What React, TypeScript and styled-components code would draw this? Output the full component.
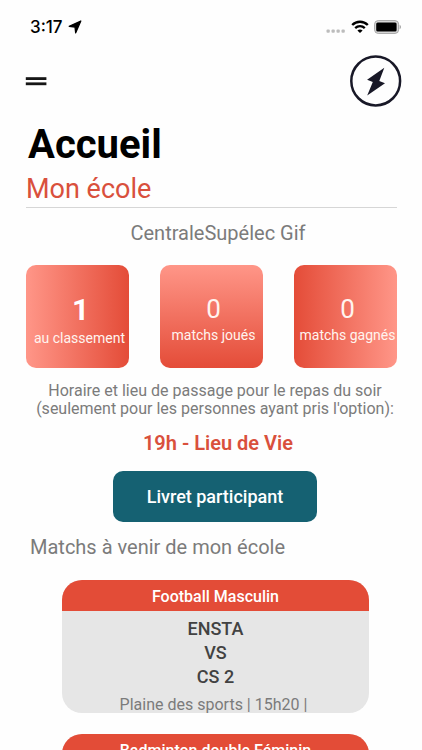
import React from "react";
import styled, { createGlobalStyle, css } from "styled-components";

const GlobalStyle = createGlobalStyle`
  *, *::before, *::after { box-sizing: border-box; }
  body {
    margin: 0;
    background: #fefefe;
    color: #7b7b7b;
    font-family: Roboto, "Liberation Sans", sans-serif;
  }
  :where(h1, h2, h3, p, dl, dt, dd) { margin: 0; font-weight: 400; }
`;

const Screen = styled.div`
  height: 100vh;
  overflow-y: auto;
  scrollbar-width: none;
`;

const StatusBar = styled.div`
  display: flex;
  align-items: center;
  justify-content: space-between;
  height: 54px;
  padding: 0 20px 0 30px;
  color: #000;
`;

const StatusGroup = styled.div<{ $gap: number }>`
  display: flex;
  align-items: center;
  gap: ${({ $gap }) => $gap}px;
`;

const Clock = styled.time`
  font: 500 17px/20px Inter, sans-serif;
`;

const TopBar = styled.header`
  display: flex;
  align-items: center;
  justify-content: space-between;
  height: 54px;
  padding: 0 20px 0 25px;
`;

const IconButton = styled.button`
  display: flex;
  padding: 0;
  border: 0;
  background: none;
  cursor: pointer;
`;

const Content = styled.main`
  padding: 13px 25px 24px 26px;
`;

const PageTitle = styled.h1`
  padding-left: 2px;
  color: #000;
  font-size: 40px;
  line-height: 48px;
  font-weight: 700;
`;

const SchoolTitle = styled.h2`
  padding-top: 3px;
  border-bottom: 1px solid #d6d6d6;
  color: #d9503c;
  font-size: 27px;
  line-height: 35px;
`;

const SchoolName = styled.p`
  margin-top: 12px;
  padding-left: 13px;
  font-size: 20px;
  line-height: 26px;
  text-align: center;
`;

const Stats = styled.dl`
  display: flex;
  justify-content: space-between;
  margin-top: 19px;
`;

const Stat = styled.div<{ $direction: string; $strong?: boolean }>`
  display: flex;
  flex-direction: column-reverse;
  align-items: center;
  justify-content: center;
  width: 103px;
  height: 103px;
  padding: 2px 0 0 4px;
  border-radius: 10px;
  background: linear-gradient(${({ $direction }) => $direction}, #ff9688, #e44c38);
  color: #fff4ef;

  dt {
    font-size: 14px;
    line-height: 18px;
    white-space: nowrap;
  }

  dd {
    font-size: 26px;
    line-height: 34px;
  }

  ${({ $strong }) =>
    $strong &&
    css`
      padding-top: 4px;
      dd {
        padding-left: 2px;
        color: #fff;
        font-size: 30px;
        line-height: 38px;
        font-weight: 700;
      }
    `}
`;

const MealNote = styled.p`
  margin-top: 14px;
  padding-left: 7px;
  font-size: 16px;
  line-height: 18px;
  text-align: center;
  white-space: nowrap;
`;

const MealPlace = styled.p`
  margin-top: 12px;
  padding-left: 13px;
  color: #d9503c;
  font-size: 20px;
  line-height: 26px;
  font-weight: 600;
  text-align: center;
`;

const Actions = styled.div`
  display: flex;
  justify-content: center;
  margin-top: 15px;
  padding-left: 7px;
`;

const BookletButton = styled.button`
  height: 51px;
  padding: 1px 34px 0;
  border: 0;
  border-radius: 10px;
  background: #156172;
  color: #fff;
  font: 500 18px/24px Roboto, sans-serif;
  cursor: pointer;
`;

const MatchesTitle = styled.h2`
  margin-top: 12px;
  padding-left: 4px;
  font-size: 20px;
  line-height: 26px;
`;

const MatchList = styled.div`
  display: flex;
  flex-direction: column;
  gap: 21px;
  margin-top: 20px;
  padding: 0 28px 0 36px;
`;

const MatchCard = styled.article`
  height: 133px;
  overflow: hidden;
  border-radius: 20px;
  background: #e6e6e6;
  text-align: center;
`;

const MatchSport = styled.h3`
  padding: 7px 0 4px;
  background: #e34c37;
  color: #fff;
  font-size: 16px;
  line-height: 20px;
  font-weight: 500;
`;

const Teams = styled.div`
  padding-top: 6px;
  color: #424242;
`;

const Team = styled.p`
  font-size: 18px;
  line-height: 24px;
  font-weight: 500;
`;

const Place = styled.p`
  margin-top: 6px;
  padding-right: 4px;
  font-size: 16px;
  line-height: 20px;
`;

type Match = { sport: string; teams: string[]; place: string };

const matches: Match[] = [
  { sport: "Football Masculin", teams: ["ENSTA", "VS", "CS 2"], place: "Plaine des sports | 15h20 |" },
  { sport: "Badminton double Féminin", teams: [], place: "" },
];

const LocationIcon = () => (
  <svg width="14" height="14" viewBox="0 0 14 14" aria-hidden="true">
    <path
      d="M12.8 1 1.2 6.3l5.8.7.7 5.8z"
      fill="#000"
      stroke="#000"
      strokeWidth="1.3"
      strokeLinejoin="round"
    />
  </svg>
);

const CellularIcon = () => (
  <svg width="20" height="12" viewBox="0 0 20 12" fill="#bcbcbc" aria-hidden="true">
    <rect x="0.5" y="8.5" width="3.3" height="3.2" rx="1" />
    <rect x="5.5" y="8.5" width="3.3" height="3.2" rx="1" />
    <rect x="10.5" y="8.5" width="3.3" height="3.2" rx="1" />
    <rect x="15.5" y="8.5" width="3.3" height="3.2" rx="1" />
  </svg>
);

const WifiIcon = () => (
  <svg width="18" height="14" viewBox="0 0 18 14" fill="none" stroke="#000" aria-hidden="true">
    <path d="M1.2 5C5.6.6 12.4.6 16.8 5" strokeWidth="2.4" />
    <path d="M4.2 8.1c2.7-2.6 6.9-2.6 9.6 0" strokeWidth="2.3" />
    <path d="M6.4 10.5c1.5-1.3 3.7-1.3 5.2 0L9 13.1z" fill="#000" stroke="none" />
  </svg>
);

const BatteryIcon = () => (
  <svg width="28" height="14" viewBox="0 0 28 14" aria-hidden="true">
    <rect x="0.6" y="0.6" width="24" height="12.8" rx="3.6" fill="#dcdcdc" stroke="#a5a5a5" />
    <rect x="2.2" y="2.5" width="20.4" height="9" rx="1.5" />
    <path d="M25.7 5c1.6.4 1.6 3.6 0 4z" fill="#9d9d9d" />
  </svg>
);

const MenuIcon = () => (
  <svg width="22" height="10" viewBox="0 0 22 10" fill="#161616" aria-hidden="true">
    <rect x="0.8" y="1.2" width="20.6" height="2.8" />
    <rect x="0.8" y="6.4" width="20.6" height="2.8" />
  </svg>
);

const BoltLogo = () => (
  <svg width="52" height="52" viewBox="0 0 52 52" aria-hidden="true">
    <circle cx="25.7" cy="26" r="24.4" fill="none" stroke="#181827" strokeWidth="2.5" />
    <path d="M34.3 12.7 17.1 24.7 22.8 27 17.2 40.4 35 28.2 29.3 25.9Z" fill="#181827" />
  </svg>
);

export default function App() {
  return (
    <Screen>
      <GlobalStyle />
      <StatusBar>
        <StatusGroup $gap={5}>
          <Clock>3:17</Clock>
          <LocationIcon />
        </StatusGroup>
        <StatusGroup $gap={5}>
          <CellularIcon />
          <WifiIcon />
          <BatteryIcon />
        </StatusGroup>
      </StatusBar>
      <TopBar>
        <IconButton type="button" aria-label="Menu">
          <MenuIcon />
        </IconButton>
        <IconButton type="button" aria-label="Profil">
          <BoltLogo />
        </IconButton>
      </TopBar>
      <Content>
        <PageTitle>Accueil</PageTitle>
        <SchoolTitle>Mon école</SchoolTitle>
        <SchoolName>CentraleSupélec Gif</SchoolName>
        <Stats>
          <Stat $direction="to right" $strong>
            <dt>au classement</dt>
            <dd>1</dd>
          </Stat>
          <Stat $direction="to bottom">
            <dt>matchs joués</dt>
            <dd>0</dd>
          </Stat>
          <Stat $direction="to left">
            <dt>matchs gagnés</dt>
            <dd>0</dd>
          </Stat>
        </Stats>
        <MealNote>
          Horaire et lieu de passage pour le repas du soir
          <br />
          (seulement pour les personnes ayant pris l'option):
        </MealNote>
        <MealPlace>19h - Lieu de Vie</MealPlace>
        <Actions>
          <BookletButton type="button">Livret participant</BookletButton>
        </Actions>
        <MatchesTitle>Matchs à venir de mon école</MatchesTitle>
        <MatchList>
          {matches.map((match) => (
            <MatchCard key={match.sport}>
              <MatchSport>{match.sport}</MatchSport>
              {match.teams.length > 0 && (
                <Teams>
                  {match.teams.map((line) => (
                    <Team key={line}>{line}</Team>
                  ))}
                </Teams>
              )}
              {match.place && <Place>{match.place}</Place>}
            </MatchCard>
          ))}
        </MatchList>
      </Content>
    </Screen>
  );
}
